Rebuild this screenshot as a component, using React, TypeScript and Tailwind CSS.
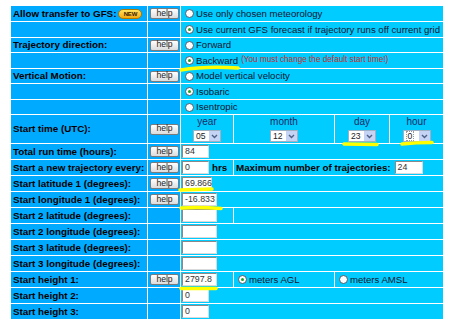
import React from "react";

type Kids = { children?: React.ReactNode; className?: string };

const Label = ({ children, className = "" }: Kids) => (
  <div className={`flex items-center bg-[#00aaff] pl-[2px] text-[9.8px] font-bold leading-none text-black whitespace-nowrap ${className}`}>
    {children}
  </div>
);

const HelpCell = ({ show }: { show?: boolean }) => (
  <div className="flex items-center bg-[#00aaff] pl-[2px]">
    {show && (
      <button className="flex h-[11px] w-[29px] items-center justify-center rounded-[2px] border border-[#7b7b7b] bg-linear-to-b from-white to-[#dcdcdc] pb-px text-[8.6px] leading-none text-[#222]">
        help
      </button>
    )}
  </div>
);

const Value = ({ children, className = "" }: Kids) => (
  <div className={`flex items-center bg-[#00ccff] text-[9.6px] leading-none text-[#0c1430] whitespace-nowrap ${className}`}>
    {children}
  </div>
);

const Radio = ({ checked }: { checked?: boolean }) => (
  <span className="flex h-[9px] w-[9px] shrink-0 items-center justify-center rounded-full border border-[#4a5a6a] bg-white">
    {checked && <span className="h-[3px] w-[3px] rounded-full bg-[#22a022]" />}
  </span>
);

const Field = ({ value = "", w }: { value?: string; w: string }) => (
  <span className={`flex h-[13px] items-center border-t border-l border-t-[#8a8a8a] border-l-[#8a8a8a] border-b border-r border-b-[#dadada] border-r-[#dadada] bg-white pl-[2px] text-[8.8px] leading-none text-[#333] ${w}`}>
    {value}
  </span>
);

const Select = ({ value, focus }: { value: string; focus?: boolean }) => (
  <span className="flex h-[12px] w-[28px] items-stretch border border-[#9eb0c4] bg-white">
    <span className="flex flex-1 items-center pl-[2px] text-[8.6px] leading-none text-[#222]">
      <span className={focus ? "border border-dotted border-[#9a9a9a] px-[1px]" : ""}>{value}</span>
    </span>
    <span className="flex w-[11px] items-center justify-center bg-[#c5d3f4]">
      <svg width="7" height="5" viewBox="0 0 7 5">
        <path d="M1 1 L3.5 3.5 L6 1" stroke="#4d6185" strokeWidth="1.4" fill="none" />
      </svg>
    </span>
  </span>
);

const TimeCol = ({ head, value, focus }: { head: string; value: string; focus?: boolean }) => (
  <div className="flex flex-col items-center justify-center gap-[3px] bg-[#00ccff] pt-px">
    <span className="text-[10px] leading-none text-[#1a2a66]">{head}</span>
    <Select value={value} focus={focus} />
  </div>
);

const NewBadge = () => (
  <span className="ml-[2px] flex h-[10px] w-[24px] items-center justify-center rounded-full border border-[#b07800] bg-linear-to-b from-[#ffe35a] to-[#f2a800] text-[6px] font-black leading-none tracking-tight text-[#3a2000]">
    NEW
  </span>
);

// hand-drawn yellow underlines on top of the form
const Marks = () => (
  <svg className="pointer-events-none absolute left-0 top-0" width="450" height="328">
    <g stroke="#ffff00" strokeWidth="3.5" strokeLinecap="round" fill="none">
      <path d="M181 70 Q 205 66 238 68" />
      <path d="M180 190 L 212 189" />
      <path d="M181 208 Q 200 207 221 208.5" />
      <path d="M344 144 L 377 144.5" />
      <path d="M402 144 Q 416 142.5 432 142.5" />
      <path d="M181 288.5 L 216 288.5" />
    </g>
  </svg>
);

export default function App() {
  return (
    <div className="relative h-[328px] w-[450px] overflow-hidden bg-white font-['Liberation_Sans',Arial,sans-serif]">
      <div className="ml-[11px] mt-[6px] grid w-[432px] grid-cols-[136px_32px_52px_100px_54px_53px] grid-rows-[15px_15px_14px_15px_14px_15px_14px_28px_repeat(11,15px)] gap-px">
        <Label>
          Allow transfer to GFS:
          <NewBadge />
        </Label>
        <HelpCell show />
        <Value className="col-span-4 gap-[2px] pl-[4px]">
          <Radio />
          Use only chosen meteorology
        </Value>

        <Label />
        <HelpCell />
        <Value className="col-span-4 gap-[2px] pl-[4px]">
          <Radio checked />
          Use current GFS forecast if trajectory runs off current grid
        </Value>

        <Label>Trajectory direction:</Label>
        <HelpCell show />
        <Value className="col-span-4 gap-[2px] pl-[4px]">
          <Radio />
          Forward
        </Value>

        <Label />
        <HelpCell />
        <Value className="col-span-4 gap-[2px] pl-[4px]">
          <Radio checked />
          Backward
          <span className="ml-[1px] text-[8.2px] text-[#c42d2d]">(You must change the default start time!)</span>
        </Value>

        <Label>Vertical Motion:</Label>
        <HelpCell show />
        <Value className="col-span-4 gap-[2px] pl-[4px]">
          <Radio />
          Model vertical velocity
        </Value>

        <Label />
        <HelpCell />
        <Value className="col-span-4 gap-[2px] pl-[4px]">
          <Radio checked />
          Isobaric
        </Value>

        <Label />
        <HelpCell />
        <Value className="col-span-4 gap-[2px] pl-[4px]">
          <Radio />
          Isentropic
        </Value>

        <Label>Start time (UTC):</Label>
        <HelpCell show />
        <TimeCol head="year" value="05" />
        <TimeCol head="month" value="12" />
        <TimeCol head="day" value="23" />
        <TimeCol head="hour" value="0" focus />

        <Label>Total run time (hours):</Label>
        <HelpCell show />
        <Value className="col-span-4 pl-px">
          <Field value="84" w="w-[27px]" />
        </Value>

        <Label>Start a new trajectory every:</Label>
        <HelpCell show />
        <Value className="pl-px">
          <Field value="0" w="w-[27px]" />
          <span className="ml-[3px] text-[9.8px] font-bold text-black">hrs</span>
        </Value>
        <Value className="col-span-3 pl-[2px] text-[9.8px] font-bold text-black">
          Maximum number of trajectories:
          <span className="ml-[4px] font-normal">
            <Field value="24" w="w-[28px]" />
          </span>
        </Value>

        <Label>Start latitude 1 (degrees):</Label>
        <HelpCell show />
        <Value className="col-span-4 pl-px">
          <Field value="69.866" w="w-[30px]" />
        </Value>

        <Label>Start longitude 1 (degrees):</Label>
        <HelpCell show />
        <Value className="col-span-4 pl-px">
          <Field value="-16.833" w="w-[35px]" />
        </Value>

        <Label>Start 2 latitude (degrees):</Label>
        <HelpCell />
        <Value className="pl-px">
          <Field w="w-[35px]" />
        </Value>
        <Value className="col-span-3" />

        <Label>Start 2 longitude (degrees):</Label>
        <HelpCell />
        <Value className="col-span-4 pl-px">
          <Field w="w-[35px]" />
        </Value>

        <Label>Start 3 latitude (degrees):</Label>
        <HelpCell />
        <Value className="col-span-4 pl-px">
          <Field w="w-[35px]" />
        </Value>

        <Label>Start 3 longitude (degrees):</Label>
        <HelpCell />
        <Value className="col-span-4 pl-px">
          <Field w="w-[35px]" />
        </Value>

        <Label>Start height 1:</Label>
        <HelpCell show />
        <Value className="pl-px">
          <Field value="2797.8" w="w-[35px]" />
        </Value>
        <Value className="gap-[2px] pl-[4px]">
          <Radio checked />
          meters AGL
        </Value>
        <Value className="col-span-2 gap-[2px] pl-[4px]">
          <Radio />
          meters AMSL
        </Value>

        <Label>Start height 2:</Label>
        <HelpCell />
        <Value className="col-span-4 pl-px">
          <Field value="0" w="w-[27px]" />
        </Value>

        <Label>Start height 3:</Label>
        <HelpCell />
        <Value className="col-span-4 pl-px">
          <Field value="0" w="w-[27px]" />
        </Value>
      </div>
      <Marks />
    </div>
  );
}
